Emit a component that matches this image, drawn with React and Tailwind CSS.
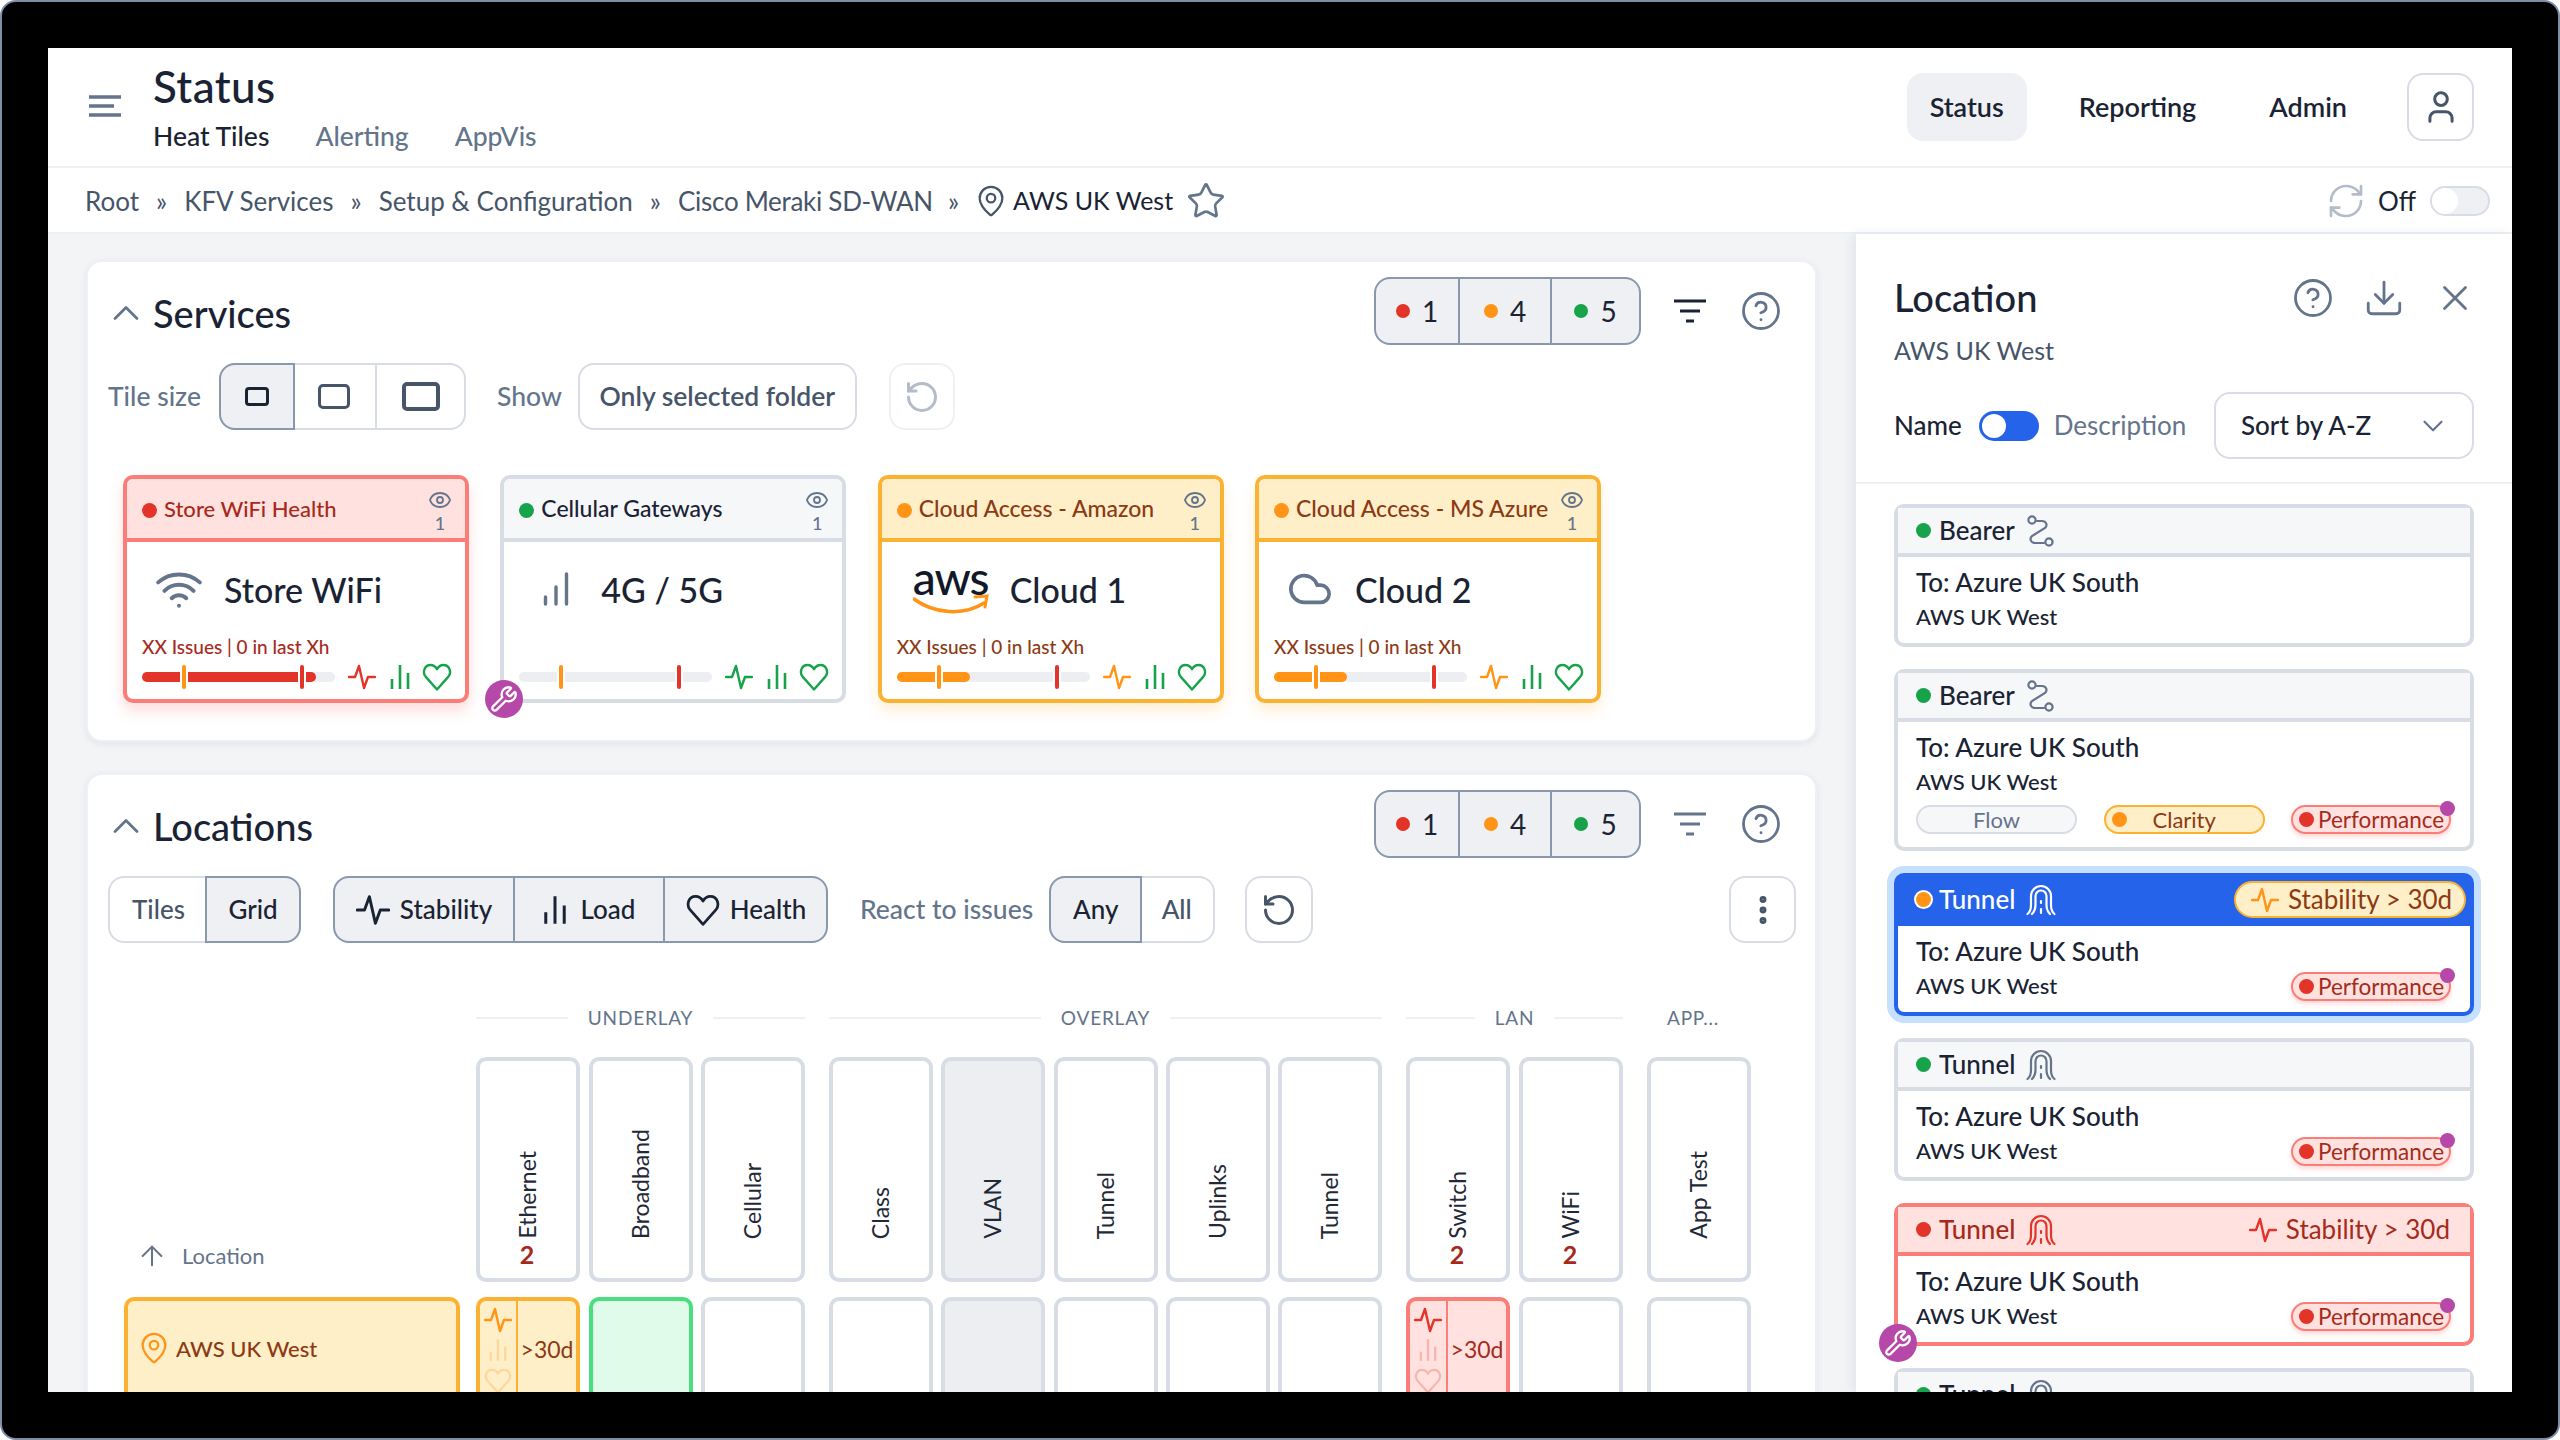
import React from 'react';
import {
  ArrowUp, ChevronDown, ChevronUp, CircleHelp, Cloud, Download, EllipsisVertical, Eye,
  MapPin, RefreshCw, RotateCcw, Star, User, Wifi, Wrench, X,
} from 'lucide-react';

const TONES = {
  red: { border: 'border-[#fb7d77]', head: 'bg-[#ffe2df]', text: 'text-[#a62a1b]', dot: 'bg-[#e23428]', fill: 'bg-[#e23428]', stroke: 'text-[#e23428]', shadow: 'shadow-[0_8px_14px_rgba(251,125,119,0.25)]' },
  orange: { border: 'border-[#fbb132]', head: 'bg-[#feefc8]', text: 'text-[#8c3a14]', dot: 'bg-[#ff9416]', fill: 'bg-[#ff9416]', stroke: 'text-[#ff9416]', shadow: 'shadow-[0_8px_14px_rgba(251,177,50,0.2)]' },
  gray: { border: 'border-[#d8dce4]', head: 'bg-[#f6f7f9]', text: 'text-[#1a2333]', dot: 'bg-[#16a34a]', fill: 'bg-[#eceef2]', stroke: 'text-[#16a34a]', shadow: '' },
};

function Pulse({ className }) {
  return (
    <svg viewBox="0 0 28 26" fill="none" stroke="currentColor" strokeWidth="2.4" strokeLinejoin="round" strokeLinecap="round" className={className}>
      <path d="M1 13h6l4-11 5 22 4-11h7" />
    </svg>
  );
}

function Bars({ className }) {
  return (
    <svg viewBox="0 0 20 26" fill="none" stroke="currentColor" strokeWidth="2.6" className={className}>
      <path d="M2 25v-10M10 25V1M18 25V9" />
    </svg>
  );
}

function Signal({ className }) {
  return (
    <svg viewBox="0 0 26 34" fill="none" stroke="currentColor" strokeWidth="3.4" strokeLinecap="round" className={className}>
      <path d="M2.500 32v-7M13 32V15M23.500 32V2" />
    </svg>
  );
}

function Heart({ className }) {
  return (
    <svg viewBox="0 0 30 28" fill="none" stroke="currentColor" strokeWidth="2.4" strokeLinejoin="round" className={className}>
      <path d="M15 26.500 3.600 13.600C.4 9.800 2 2 8.600 2c3 0 5 1.600 6.400 4.200C16.400 3.600 18.400 2 21.400 2c6.600 0 8.200 7.800 5 11.600z" />
    </svg>
  );
}

function Tunnel({ className }) {
  return (
    <svg viewBox="0 0 30 32" fill="none" stroke="currentColor" strokeWidth="2.200" strokeLinecap="round" className={className}>
      <path d="M1.500 30c2.500-2 3.500-5 3.500-9v-9a10 10 0 0 1 20 0v9c0 4 1 7 3.500 9" />
      <path d="M6 30c2.500-2.500 3.500-5 3.500-9v-9a5.500 5.500 0 0 1 11 0v9c0 4 1 6.500 3.500 9" />
      <path d="M15 17v2M15 25v4" />
    </svg>
  );
}

function RouteIcon({ className }) {
  return (
    <svg viewBox="0 0 28 32" fill="none" stroke="currentColor" strokeWidth="2.200" strokeLinecap="round" className={className}>
      <circle cx="6" cy="5" r="3.600" />
      <circle cx="23" cy="27" r="3.600" />
      <path d="M11 6h5c4 0 6 4 3 7L6 21c-3 3-1 7 3 7h9" />
    </svg>
  );
}

function FilterLines({ className }) {
  return (
    <svg viewBox="0 0 32 24" fill="none" stroke="currentColor" strokeWidth="3" className={className}>
      <path d="M0 2h32M6 12h20M12 22h8" />
    </svg>
  );
}

function WrenchBadge({ className }) {
  return (
    <span className={`absolute w-[38px] h-[38px] rounded-full bg-[#b548a8] flex items-center justify-center ${className}`}>
      <Wrench size={28} strokeWidth={2} className="text-white" />
    </span>
  );
}

function Dot({ className }) {
  return <span className={`inline-block rounded-full shrink-0 ${className}`} />;
}

function CountGroup({ filterColor }) {
  return (
    <div className="ml-auto flex items-center">
      <div className="flex h-[68px] w-[267px] rounded-[16px] border-2 border-[#8a98ad] bg-[#eef0f3] divide-x-2 divide-[#8a98ad] overflow-hidden">
        {[['bg-[#e23428]', '1', 'w-[84px]'], ['bg-[#ff9416]', '4', 'w-[92px]'], ['bg-[#16a34a]', '5', 'flex-1']].map(([c, n, w]) => (
          <div key={n} className={`${w} flex items-center justify-center gap-[12px] text-[28px] text-[#1a2333]`}>
            <Dot className={`w-[14px] h-[14px] ${c}`} />
            {n}
          </div>
        ))}
      </div>
      <FilterLines className={`ml-[33px] w-[32px] h-[24px] ${filterColor}`} />
      <CircleHelp size={42} strokeWidth={1.6} className="ml-[34px] text-[#64748b]" />
    </div>
  );
}

function SectionTitle({ title, tone }) {
  return (
    <div className="flex items-center h-[68px] pl-[16px] pr-[33px]">
      <ChevronUp size={44} strokeWidth={1.5} className="text-[#64748b] mt-[4px]" />
      <span className="ml-[5px] mt-[4px] text-[38px] font-medium text-[#1a2333]">{title}</span>
      <CountGroup filterColor={tone} />
    </div>
  );
}

function ServiceTile({ tone, head, title, icon, slot, fill, ticks, pulseTone, wrench }) {
  const t = TONES[tone];
  return (
    <div className={`relative w-[346px] h-[228px] rounded-[10px] border-4 bg-white flex flex-col ${t.border} ${t.shadow}`}>
      <div className={`h-[63px] shrink-0 border-b-4 rounded-t-[6px] flex items-center pl-[15px] ${t.border} ${t.head}`}>
        <Dot className={`w-[15px] h-[15px] mt-[3px] ${t.dot}`} />
        <span className={`ml-[7px] font-medium ${tone === 'red' ? 'text-[22px]' : 'text-[23px]'} ${t.text}`}>{head}</span>
        <div className="ml-auto mr-[13px] mt-[4px] w-[24px] flex flex-col items-center text-[#64748b]">
          <Eye size={24} strokeWidth={1.8} />
          <span className="text-[18px] font-medium leading-[20px] mt-[1px]">1</span>
        </div>
      </div>
      <div className="h-[94px] flex items-center">
        <div className={`shrink-0 flex justify-center ${slot}`}>{icon}</div>
        <span className="text-[34px] font-medium text-[#1a2333]">{title}</span>
      </div>
      <div className={`h-[22px] pl-[15px] text-[19px] leading-[22px] font-medium ${t.text}`}>
        {tone === 'gray' ? '' : 'XX Issues | 0 in last Xh'}
      </div>
      <div className="mt-[5px] h-[28px] pl-[15px] flex items-center">
        <div className="relative w-[193px] h-[10px] rounded-full bg-[#eceef2]">
          <div className={`h-full rounded-full ${t.fill}`} style={{ width: fill }} />
          {ticks.map(([x, c]) => (
            <span key={x} className={`absolute top-[-7px] w-[4px] h-[24px] rounded-full shadow-[0_0_0_2px_#fff] ${c}`} style={{ left: x }} />
          ))}
        </div>
        <Pulse className={`ml-[13px] w-[28px] h-[26px] ${TONES[pulseTone].stroke}`} />
        <Bars className="ml-[14px] w-[20px] h-[26px] text-[#16a34a]" />
        <Heart className="ml-[12px] w-[30px] h-[28px] text-[#16a34a]" />
      </div>
      {wrench && <WrenchBadge className="-right-[58px] -bottom-[19px] z-10" />}
    </div>
  );
}

function Segment({ children, className }) {
  return <div className={`flex items-center justify-center ${className}`}>{children}</div>;
}

function ColHead({ name, count, gray }) {
  return (
    <div className={`w-[104px] h-[225px] rounded-[10px] border-4 border-[#d8dce4] flex flex-col items-center justify-end pb-[9px] pr-[2px] ${gray ? 'bg-[#eceef2]' : 'bg-white'}`}>
      <span className="[writing-mode:vertical-rl] rotate-180 text-[23px] leading-[28px] text-[#1f2937]">{name}</span>
      <span className="h-[30px] text-[25px] font-bold leading-[30px] text-[#a62a1b]">{count}</span>
    </div>
  );
}

function StatusCell({ tone }) {
  const t = TONES[tone];
  return (
    <div className={`w-[104px] h-[104px] rounded-t-[10px] border-4 flex ${t.border} ${t.head}`}>
      <div className={`w-[38px] shrink-0 border-r-2 flex flex-col items-center pt-[6px] ${t.border}`}>
        <Pulse className={`w-[28px] h-[26px] ${t.stroke}`} />
        <Bars className={`mt-[5px] w-[18px] h-[24px] opacity-25 ${t.stroke}`} />
        <Heart className={`mt-[6px] w-[28px] h-[26px] opacity-25 ${t.stroke}`} />
      </div>
      <span className={`flex-1 flex items-center justify-center text-[23px] ${t.text}`}>&gt;30d</span>
    </div>
  );
}

function BlankCell({ className }) {
  return <div className={`w-[104px] h-[104px] rounded-t-[10px] border-4 ${className}`} />;
}

function GroupLabel({ label, width, lines = true }) {
  return (
    <div className={`${width} flex items-center gap-[20px] text-[19px] tracking-[0.8px] text-[#64748b]`}>
      {lines && <span className="flex-1 h-[2px] bg-[#eef0f3]" />}
      <span className={lines ? '' : 'ml-[20px]'}>{label}</span>
      {lines && <span className="flex-1 h-[2px] bg-[#eef0f3]" />}
    </div>
  );
}

function PerfPill({ extra }) {
  return (
    <span className={`relative w-[160px] h-[29px] rounded-full border-2 border-[#fb7d77] bg-[#ffe2df] shadow-[0_3px_5px_rgba(251,125,119,0.3)] flex items-center pl-[6px] text-[22.5px] text-[#a62a1b] ${extra || ''}`}>
      <Dot className="w-[15px] h-[15px] bg-[#e23428]" />
      <span className="ml-[4px]">Performance</span>
      <Dot className="absolute -right-[6px] -top-[6px] w-[15px] h-[15px] bg-[#b548a8]" />
    </span>
  );
}

function LocCard({ tone, kind, icon, perf, right, pills, selected, wrench, headOnly }) {
  const t = TONES[tone];
  const border = selected ? 'border-[#2563eb]' : t.border;
  const head = selected ? 'bg-[#2563eb]' : t.head;
  const text = selected ? 'text-white' : tone === 'gray' ? 'text-[#1a2333]' : t.text;
  const iconColor = selected ? 'text-white' : tone === 'gray' ? 'text-[#64748b]' : t.stroke;
  return (
    <div className={`relative shrink-0 rounded-[10px] border-4 bg-white ${border} ${selected ? 'shadow-[0_0_0_7px_#c5e1ff]' : ''}`}>
      <div className={`h-[49px] border-b-4 flex items-center pl-[18px] pr-[18px] ${border} ${head}`}>
        <Dot className={`w-[15px] h-[15px] ${t.dot} ${selected ? 'shadow-[0_0_0_2px_#fff]' : ''}`} />
        <span className={`ml-[8px] text-[26px] font-medium ${text}`}>{kind}</span>
        <span className={`ml-[11px] flex ${iconColor}`}>{icon}</span>
        {right === 'pill' && (
          <span className="ml-auto -mr-[14px] w-[232px] h-[37px] rounded-full border-2 border-[#fbb132] bg-[#feefc8] flex items-center pl-[15px] text-[26px] text-[#8c3a14]">
            <Pulse className="w-[28px] h-[26px] text-[#ff9416]" />
            <span className="ml-[9px]">Stability &gt; 30d</span>
          </span>
        )}
        {right === 'plain' && (
          <span className={`ml-auto flex items-center text-[26px] ${text}`}>
            <Pulse className={`w-[28px] h-[26px] ${iconColor}`} />
            <span className="ml-[9px] mr-[2px]">Stability &gt; 30d</span>
          </span>
        )}
      </div>
      {!headOnly && (
        <div className="pt-[10px] pl-[18px] pr-[19px] pb-[12px]">
          <div className="h-[30px] text-[26px] leading-[30px] font-medium text-[#1a2333]">To: Azure UK South</div>
          <div className="mt-[4px] flex items-center justify-between h-[30px]">
            <span className="text-[22px] font-medium text-[#1a2333]">AWS UK West</span>
            {perf && <PerfPill extra="mt-[3px]" />}
          </div>
          {pills && (
            <div className="mt-[9px] mb-[1px] flex justify-between">
              <span className="w-[161px] h-[29px] rounded-full border-2 border-[#d8dce4] bg-[#f6f7f9] flex items-center justify-center text-[22px] text-[#64748b]">Flow</span>
              <span className="w-[161px] h-[29px] rounded-full border-2 border-[#fbb132] bg-[#feefc8] flex items-center pl-[6px] text-[22px] text-[#8c3a14]">
                <Dot className="w-[15px] h-[15px] bg-[#ff9416]" />
                <span className="ml-[26px]">Clarity</span>
              </span>
              <PerfPill />
            </div>
          )}
        </div>
      )}
      {wrench && <WrenchBadge className="-left-[19px] -bottom-[20px]" />}
    </div>
  );
}

export default function App() {
  const routeIcon = <RouteIcon className="w-[28px] h-[32px]" />;
  const tunnelIcon = <Tunnel className="w-[30px] h-[32px]" />;
  const ticksPlain = [['40px', 'bg-[#ff9416]'], ['158px', 'bg-[#e23428]']];

  return (
    <div className="w-[2560px] h-[1440px] bg-white font-[Lato,sans-serif] overflow-hidden">
      <div className="w-full h-full bg-black rounded-[16px] border-2 border-[#7f8ea3] p-[46px]">
        <div className="w-[2464px] h-[1344px] bg-[#f3f4f6] flex flex-col overflow-hidden">
          {/* top bar */}
          <header className="h-[120px] shrink-0 bg-white border-b-2 border-[#eef0f3] flex items-center pl-[41px] pr-[38px]">
            <svg viewBox="0 0 32 22" fill="none" stroke="#64748b" strokeWidth="3.400" className="w-[32px] h-[22px] mt-[-2px]">
              <path d="M0 2h32M0 11h25M0 20h32" />
            </svg>
            <div className="ml-[32px] flex flex-col">
              <span className="text-[44px] leading-[50px] mt-[-2px] tracking-[0.4px] font-medium text-[#1a2333]">Status</span>
              <div className="mt-[9px] flex gap-[46px] text-[26.500px] leading-[32px] font-medium text-[#64748b]">
                <span className="text-[#1a2333]">Heat Tiles</span>
                <span>Alerting</span>
                <span>AppVis</span>
              </div>
            </div>
            <nav className="ml-auto flex items-center text-[27px] font-semibold text-[#1a2333]">
              <span className="w-[120px] h-[68px] rounded-[16px] bg-[#eef0f3] flex items-center justify-center">Status</span>
              <span className="ml-[52px]">Reporting</span>
              <span className="ml-[73px]">Admin</span>
              <span className="ml-[60px] w-[67px] h-[68px] rounded-[16px] border-2 border-[#d8dce4] flex items-center justify-center text-[#475569]">
                <User size={38} strokeWidth={1.9} />
              </span>
            </nav>
          </header>

          {/* breadcrumb */}
          <div className="h-[66px] shrink-0 bg-white border-b-2 border-[#eef0f3] flex items-center pl-[37px] pr-[22px] pt-[2px] text-[26px] text-[#475569]">
            <span>Root</span>
            <span className="mx-[17px]">»</span>
            <span>KFV Services</span>
            <span className="mx-[17px]">»</span>
            <span>Setup &amp; Configuration</span>
            <span className="mx-[17px]">»</span>
            <span className="tracking-[-0.3px]">Cisco Meraki SD-WAN</span>
            <span className="mx-[15px]">»</span>
            <MapPin size={34} strokeWidth={1.6} className="text-[#475569]" />
            <span className="ml-[5px] text-[25px] text-[#1a2333]">AWS UK West</span>
            <Star size={40} strokeWidth={1.6} className="ml-[13px] text-[#64748b]" />
            <RefreshCw size={40} strokeWidth={1.6} className="ml-auto text-[#b4bcc9]" />
            <span className="ml-[12px] text-[#1a2333]">Off</span>
            <span className="ml-[14px] w-[60px] h-[30px] rounded-full border-2 border-[#d8dce4] bg-[#eef0f3] flex items-center">
              <span className="w-[26px] h-[26px] rounded-full bg-white" />
            </span>
          </div>

          <div className="flex-1 flex min-h-0">
            {/* main column */}
            <main className="w-[1808px] shrink-0 pl-[38px] pr-[39px] pt-[26px] flex flex-col gap-[31px] overflow-hidden">
              <section className="h-[482px] shrink-0 rounded-[16px] bg-white border-2 border-[#eef0f3] shadow-[0_2px_6px_rgba(148,163,184,0.2)] pt-[15px]">
                <SectionTitle title="Services" tone="text-[#1a2333]" />
                <div className="mt-[18px] h-[67px] pl-[20px] flex items-center text-[26.500px]">
                  <span className="text-[#64748b] font-medium w-[111px]">Tile size</span>
                  <div className="flex h-[67px] rounded-[16px] border-2 border-[#d8dce4]">
                    <Segment className="-m-[2px] w-[76px] rounded-l-[16px] border-2 border-[#8a98ad] bg-[#eef0f3]">
                      <span className="w-[24px] h-[19px] rounded-[4px] border-[3px] border-[#1a2333]" />
                    </Segment>
                    <Segment className="w-[84px] border-r-2 border-[#d8dce4]">
                      <span className="w-[32px] h-[25px] rounded-[5px] border-[3px] border-[#475569]" />
                    </Segment>
                    <Segment className="w-[87px]">
                      <span className="w-[38px] h-[29px] rounded-[5px] border-[4px] border-[#475569]" />
                    </Segment>
                  </div>
                  <span className="ml-[31px] text-[#64748b] font-medium">Show</span>
                  <span className="ml-[16px] w-[279px] h-[67px] rounded-[16px] border-2 border-[#d8dce4] flex items-center justify-center font-semibold text-[#475569]">Only selected folder</span>
                  <span className="ml-[32px] w-[66px] h-[67px] rounded-[16px] border-2 border-[#eef0f3] flex items-center justify-center text-[#b4bcc9]">
                    <RotateCcw size={36} strokeWidth={2} />
                  </span>
                </div>
                <div className="mt-[45px] pl-[35px] flex gap-[31.330px]">
                  <ServiceTile tone="red" head="Store WiFi Health" title="Store WiFi" slot="w-[97px] pl-[7px]"
                    icon={<Wifi size={50} strokeWidth={1.9} className="text-[#64748b]" />}
                    fill="174px" pulseTone="red" ticks={ticksPlain} wrench />
                  <ServiceTile tone="gray" head="Cellular Gateways" title="4G / 5G" slot="w-[97px] pl-[7px]"
                    icon={<Signal className="w-[26px] h-[34px] text-[#64748b]" />}
                    fill="0px" pulseTone="gray" ticks={ticksPlain} />
                  <ServiceTile tone="orange" head="Cloud Access - Amazon" title="Cloud 1" slot="w-[128px] pl-[31px] justify-start"
                    icon={(
                      <span className="relative block w-[76px] h-[50px]">
                        <span className="block text-center text-[46px] leading-[28px] font-medium tracking-[-1px] text-[#111827]">aws</span>
                        <svg viewBox="0 0 76 22" fill="none" className="absolute left-0 bottom-[-2px] w-[76px] h-[22px]">
                          <path d="M1 5c20 15 50 17 70 4" stroke="#ff9416" strokeWidth="3.500" strokeLinecap="round" />
                          <path d="M62 3l12-1-2 11" stroke="#ff9416" strokeWidth="3" strokeLinecap="round" />
                        </svg>
                      </span>
                    )}
                    fill="73px" pulseTone="orange" ticks={ticksPlain} />
                  <ServiceTile tone="orange" head="Cloud Access - MS Azure" title="Cloud 2" slot="w-[96px] pl-[7px]"
                    icon={<Cloud size={46} strokeWidth={1.9} className="text-[#64748b]" />}
                    fill="73px" pulseTone="orange" ticks={ticksPlain} />
                </div>
              </section>

              <section className="shrink-0 rounded-t-[16px] bg-white border-2 border-[#eef0f3] shadow-[0_2px_6px_rgba(148,163,184,0.2)] pt-[15px]">
                <SectionTitle title="Locations" tone="text-[#64748b]" />
                <div className="mt-[18px] h-[67px] pl-[20px] pr-[19px] flex items-center text-[26px] font-medium">
                  <div className="flex h-[67px] w-[193px] rounded-[16px] border-2 border-[#d8dce4]">
                    <Segment className="flex-1 text-[#475569]">Tiles</Segment>
                    <Segment className="-m-[2px] w-[96px] rounded-r-[16px] border-2 border-[#8a98ad] bg-[#eef0f3] text-[#1a2333]">Grid</Segment>
                  </div>
                  <div className="ml-[32px] flex h-[67px] w-[495px] rounded-[16px] border-2 border-[#8a98ad] bg-[#eef0f3] divide-x-2 divide-[#8a98ad] text-[#1a2333]">
                    <Segment className="w-[180px] gap-[10px]"><Pulse className="w-[34px] h-[32px]" />Stability</Segment>
                    <Segment className="w-[150px] gap-[14px]"><Bars className="w-[24px] h-[30px]" />Load</Segment>
                    <Segment className="flex-1 gap-[9px]"><Heart className="w-[36px] h-[32px]" />Health</Segment>
                  </div>
                  <span className="ml-[32px] text-[26.500px] text-[#64748b]">React to issues</span>
                  <div className="ml-[16px] flex h-[67px] w-[166px] rounded-[16px] border-2 border-[#d8dce4]">
                    <Segment className="-m-[2px] w-[93px] rounded-l-[16px] border-2 border-[#8a98ad] bg-[#eef0f3] text-[#1a2333]">Any</Segment>
                    <Segment className="flex-1 text-[#475569]">All</Segment>
                  </div>
                  <span className="ml-[30px] w-[68px] h-[67px] rounded-[16px] border-2 border-[#d8dce4] flex items-center justify-center text-[#475569]">
                    <RotateCcw size={36} strokeWidth={2} />
                  </span>
                  <span className="ml-auto w-[67px] h-[67px] rounded-[16px] border-2 border-[#d8dce4] flex items-center justify-center text-[#475569]">
                    <EllipsisVertical size={36} strokeWidth={2.600} />
                  </span>
                </div>

                <div className="mt-[63px] flex h-[24px] gap-[24px] pl-[388px]">
                  <GroupLabel label="UNDERLAY" width="w-[329px]" />
                  <GroupLabel label="OVERLAY" width="w-[553px]" />
                  <GroupLabel label="LAN" width="w-[217px]" />
                  <GroupLabel label="APP..." width="w-[103px]" lines={false} />
                </div>

                <div className="mt-[27px] flex gap-[24px]">
                  <div className="w-[364px] flex items-end pb-[10px] pl-[48px] gap-[14px] text-[22px] text-[#64748b]">
                    <ArrowUp size={32} strokeWidth={1.500} />
                    Location
                  </div>
                  <div className="w-[329px] flex justify-between">
                    <ColHead name="Ethernet" count="2" />
                    <ColHead name="Broadband" />
                    <ColHead name="Cellular" />
                  </div>
                  <div className="w-[553px] flex justify-between">
                    <ColHead name="Class" />
                    <ColHead name="VLAN" gray />
                    <ColHead name="Tunnel" />
                    <ColHead name="Uplinks" />
                    <ColHead name="Tunnel" />
                  </div>
                  <div className="w-[217px] flex justify-between">
                    <ColHead name="Switch" count="2" />
                    <ColHead name="WiFi" count="2" />
                  </div>
                  <ColHead name="App Test" />
                </div>

                <div className="mt-[15px] flex gap-[24px]">
                  <div className="w-[364px] pl-[36px]">
                    <div className="w-[336px] h-[102px] rounded-t-[10px] border-4 border-[#fbb132] bg-[#feefc8] flex items-center pl-[9px] text-[22px] font-medium text-[#8c3a14]">
                      <MapPin size={34} strokeWidth={1.6} className="text-[#ff9416]" />
                      <span className="ml-[5px]">AWS UK West</span>
                    </div>
                  </div>
                  <div className="w-[329px] flex justify-between">
                    <StatusCell tone="orange" />
                    <BlankCell className="border-[#4ade80] bg-[#e0fbe9]" />
                    <BlankCell className="border-[#d8dce4] bg-white" />
                  </div>
                  <div className="w-[553px] flex justify-between">
                    <BlankCell className="border-[#d8dce4] bg-white" />
                    <BlankCell className="border-[#d8dce4] bg-[#eceef2]" />
                    <BlankCell className="border-[#d8dce4] bg-white" />
                    <BlankCell className="border-[#d8dce4] bg-white" />
                    <BlankCell className="border-[#d8dce4] bg-white" />
                  </div>
                  <div className="w-[217px] flex justify-between">
                    <StatusCell tone="red" />
                    <BlankCell className="border-[#d8dce4] bg-white" />
                  </div>
                  <BlankCell className="border-[#d8dce4] bg-white" />
                </div>
              </section>
            </main>

            {/* location panel */}
            <aside className="w-[656px] shrink-0 bg-white shadow-[-4px_0_10px_rgba(148,163,184,0.2)] flex flex-col min-h-0">
              <div className="px-[38px] pt-[45px] pb-[23px] border-b-2 border-[#eef0f3] shrink-0">
                <div className="flex items-center h-[36px]">
                  <span className="text-[38px] font-medium text-[#1a2333]">Location</span>
                  <CircleHelp size={42} strokeWidth={1.600} className="ml-auto mt-[2px] text-[#64748b]" />
                  <Download size={42} strokeWidth={1.600} className="ml-[29px] mt-[2px] text-[#64748b]" />
                  <X size={42} strokeWidth={1.600} className="ml-[29px] mt-[2px] -mr-[2px] text-[#64748b]" />
                </div>
                <div className="mt-[20px] h-[30px] leading-[30px] text-[25px] text-[#475569]">AWS UK West</div>
                <div className="mt-[27px] h-[67px] flex items-center text-[26px]">
                  <span className="font-medium text-[#1a2333]">Name</span>
                  <span className="ml-[17px] w-[60px] h-[30px] rounded-full bg-[#2563eb] p-[3px] flex items-center">
                    <span className="w-[24px] h-[24px] rounded-full bg-white" />
                  </span>
                  <span className="ml-[15px] text-[#64748b]">Description</span>
                  <span className="ml-auto w-[260px] h-[67px] rounded-[16px] border-2 border-[#d8dce4] flex items-center pl-[25px] pr-[22px] font-medium text-[#1a2333]">
                    Sort by A-Z
                    <ChevronDown size={34} strokeWidth={1.500} className="ml-auto text-[#64748b]" />
                  </span>
                </div>
              </div>
              <div className="flex-1 min-h-0 pt-[20px] px-[38px] flex flex-col gap-[22px]">
                <LocCard tone="gray" kind="Bearer" icon={routeIcon} />
                <LocCard tone="gray" kind="Bearer" icon={routeIcon} pills />
                <LocCard tone="orange" kind="Tunnel" icon={tunnelIcon} perf right="pill" selected />
                <LocCard tone="gray" kind="Tunnel" icon={tunnelIcon} perf />
                <LocCard tone="red" kind="Tunnel" icon={tunnelIcon} perf right="plain" wrench />
                <LocCard tone="gray" kind="Tunnel" icon={tunnelIcon} headOnly />
              </div>
            </aside>
          </div>
        </div>
      </div>
    </div>
  );
}
